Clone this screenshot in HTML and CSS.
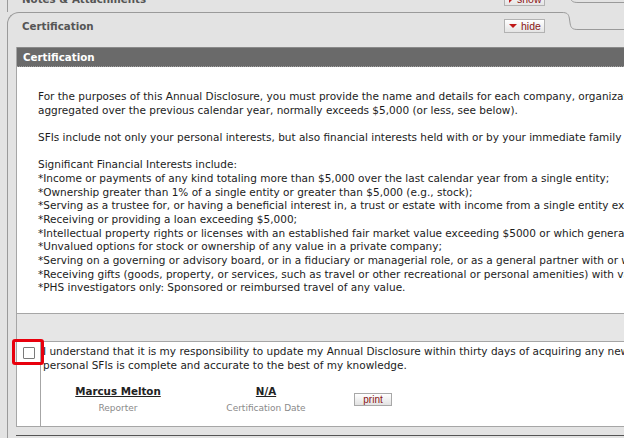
FILE: index.html
```html
<!DOCTYPE html>
<html lang="en">
<head>
<meta charset="utf-8">
<title>Certification</title>
<link rel="stylesheet" href="styles.css">
</head>
<body>
<div class="page">
  <section class="section notes">
    <div class="tab-row">
      <div class="tab">
        <h2 class="tab-title">Notes &amp; Attachments</h2>
        <button class="toggle"><span class="arrow-right"></span>show</button>
      </div>
      <svg class="tab-curve" width="16" height="18" viewBox="0 0 16 18"><path d="M0 0.5 C5 0.5 6.5 2 7.3 6 L8.2 12 C9 16 10.5 17.5 16 17.5" fill="none" stroke="#9a9a9a" stroke-width="1"/></svg>
      <div class="tab-fill"></div>
    </div>
  </section>
  <section class="section cert">
    <div class="tab-row">
      <div class="tab tab-open">
        <h2 class="tab-title">Certification</h2>
        <button class="toggle"><span class="arrow-down"></span>hide</button>
      </div>
      <svg class="tab-curve" width="16" height="18" viewBox="0 0 16 18"><path d="M0 0.5 C5 0.5 6.5 2 7.3 6 L8.2 12 C9 16 10.5 17.5 16 17.5" fill="none" stroke="#9a9a9a" stroke-width="1"/></svg>
      <div class="tab-fill"></div>
    </div>
    <div class="panel-body">
      <div class="box">
        <div class="box-head">Certification</div>
        <div class="box-text">For the purposes of this Annual Disclosure, you must provide the name and details for each company, organization or entity in which you hold a Significant Financial Interest (SFI) whose value, when<br>aggregated over the previous calendar year, normally exceeds $5,000 (or less, see below).<br><br>SFIs include not only your personal interests, but also financial interests held with or by your immediate family (spouse and dependent children).<br><br>Significant Financial Interests include:<br>*Income or payments of any kind totaling more than $5,000 over the last calendar year from a single entity;<br>*Ownership greater than 1% of a single entity or greater than $5,000 (e.g., stock);<br>*Serving as a trustee for, or having a beneficial interest in, a trust or estate with income from a single entity exceeding $5,000;<br>*Receiving or providing a loan exceeding $5,000;<br>*Intellectual property rights or licenses with an established fair market value exceeding $5000 or which generate income;<br>*Unvalued options for stock or ownership of any value in a private company;<br>*Serving on a governing or advisory board, or in a fiduciary or managerial role, or as a general partner with or without compensation;<br>*Receiving gifts (goods, property, or services, such as travel or other recreational or personal amenities) with value exceeding $5,000;<br>*PHS investigators only: Sponsored or reimbursed travel of any value.</div>
        <div class="band"></div>
        <div class="cert-row">
          <div class="cb-cell">
            <span class="checkbox"></span>
            <span class="highlight"></span>
          </div>
          <div class="cert-main">
            <div class="cert-text">I understand that it is my responsibility to update my Annual Disclosure within thirty days of acquiring any new SFI, and I certify that the information about my<br>personal SFIs is complete and accurate to the best of my knowledge.</div>
            <div class="sig-row">
              <div class="sig"><span class="sig-name">Marcus Melton</span><span class="sig-label">Reporter</span></div>
              <div class="sig"><span class="sig-name">N/A</span><span class="sig-label">Certification Date</span></div>
              <button class="print">print</button>
            </div>
          </div>
        </div>
      </div>
      <div class="next-box"></div>
    </div>
  </section>
</div>
</body>
</html>
```

FILE: styles.css
```css
html, body {
  margin: 0;
  padding: 0;
  background: #e3e3e3;
}
.page {
  width: 624px;
  height: 438px;
  overflow: hidden;
  padding-left: 7px;
  box-sizing: border-box;
  background: #e3e3e3;
  font-family: "DejaVu Sans", Verdana, sans-serif;
  color: #1c1c1c;
}
.section {
  display: flex;
  flex-direction: column;
}
.notes {
  margin-top: -15px;
}
.tab-row {
  display: flex;
  align-items: flex-start;
}
.tab {
  flex: 0 0 555px;
  box-sizing: border-box;
  height: 27px;
  border-top: 1px solid #9a9a9a;
  border-left: 1px solid #9a9a9a;
  border-top-left-radius: 12px;
  display: flex;
  justify-content: space-between;
  align-items: flex-start;
  padding: 6px 17px 0 14px;
}
.tab-open {
  height: 35px;
}
.tab-title {
  margin: 1px 0 0;
  font-size: 10.3px;
  line-height: 13px;
  font-weight: bold;
  color: #555;
}
.tab-curve {
  display: block;
  flex: 0 0 16px;
}
.tab-fill {
  flex: 1;
  height: 18px;
  box-sizing: border-box;
  border-bottom: 1px solid #9a9a9a;
}
.toggle {
  width: 41px;
  height: 14px;
  box-sizing: border-box;
  margin: 0;
  padding: 0 0 0 4px;
  border: 1px solid #b2b2b2;
  background: linear-gradient(#ffffff, #e4e4e4);
  display: flex;
  align-items: center;
  gap: 4px;
  font-family: "Liberation Sans", Arial, sans-serif;
  font-size: 10.5px;
  line-height: 12px;
  color: #8a1414;
}
.arrow-down {
  width: 0;
  height: 0;
  border-left: 4px solid transparent;
  border-right: 4px solid transparent;
  border-top: 4px solid #c01818;
}
.arrow-right {
  width: 0;
  height: 0;
  border-top: 4px solid transparent;
  border-bottom: 4px solid transparent;
  border-left: 4px solid #c01818;
}
.panel-body {
  border-left: 1px solid #9a9a9a;
  display: flex;
  flex-direction: column;
}
.box {
  margin-left: 8px;
  border-left: 1px solid #a6a6a6;
  display: flex;
  flex-direction: column;
}
.box-head {
  height: 20px;
  box-sizing: border-box;
  background: #6a6a6a;
  border-top: 1px solid #8a8a8a;
  border-bottom: 1px dotted #a0a0a0;
  color: #fff;
  font-weight: bold;
  font-size: 10.3px;
  line-height: 18px;
  padding-left: 6px;
}
.box-text {
  background: #fff;
  padding: 23px 0 18px 21px;
  font-size: 10.5px;
  line-height: 13.65px;
  white-space: nowrap;
  border-bottom: 1px solid #a6a6a6;
}
.band {
  height: 27px;
  background: #e6e6e6;
}
.cert-row {
  display: flex;
  background: #fff;
  border-top: 1px solid #a6a6a6;
  border-bottom: 1px solid #a6a6a6;
  height: 86px;
  box-sizing: border-box;
}
.cb-cell {
  position: relative;
  flex: 0 0 23px;
  border-right: 1px solid #a6a6a6;
}
.checkbox {
  display: block;
  width: 12px;
  height: 12px;
  box-sizing: border-box;
  margin: 5px 0 0 6px;
  border: 1px solid #7a7a7a;
  border-radius: 1px;
  background: #fff;
}
.highlight {
  position: absolute;
  left: -5px;
  top: -3px;
  width: 32px;
  height: 26px;
  box-sizing: border-box;
  border: 3px solid #e8000d;
  border-radius: 3px;
}
.cert-main {
  flex: 1;
  padding: 3px 0 0 2px;
  display: flex;
  flex-direction: column;
}
.cert-text {
  font-size: 10.5px;
  line-height: 13.65px;
  white-space: nowrap;
}
.sig-row {
  display: flex;
  align-items: flex-start;
  margin-top: 13px;
  padding-left: 1px;
}
.sig {
  flex: 0 0 148px;
  display: flex;
  flex-direction: column;
  align-items: center;
}
.sig-name {
  font-weight: bold;
  font-size: 10.3px;
  line-height: 13px;
  text-decoration: underline;
  color: #222;
}
.sig-label {
  margin-top: 4px;
  font-size: 9px;
  line-height: 12px;
  color: #8a8a8a;
}
.print {
  margin: 8px 0 0 14px;
  width: 38px;
  height: 13px;
  box-sizing: border-box;
  padding: 0;
  border: 1px solid #a8a8a8;
  background: linear-gradient(#ffffff, #e2e2e2);
  font-family: "Liberation Sans", Arial, sans-serif;
  font-size: 10px;
  line-height: 11px;
  color: #8a1414;
}
.next-box {
  margin: 8px 0 0 8px;
  height: 10px;
  border-top: 1px solid #555;
}
```
